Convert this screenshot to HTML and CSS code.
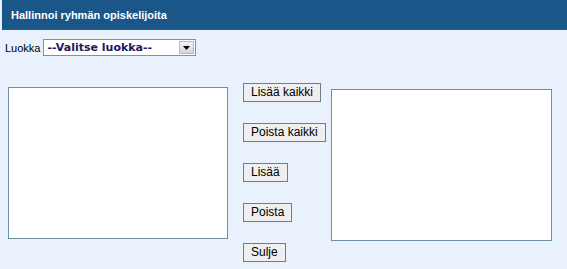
FILE: index.html
```html
<!DOCTYPE html>
<html lang="fi">
<head>
<meta charset="utf-8">
<title>Hallinnoi ryhmän opiskelijoita</title>
<link rel="stylesheet" href="styles.css">
</head>
<body>
<div class="page">
  <div class="header">Hallinnoi ryhmän opiskelijoita</div>
  <div class="filter">
    <label class="label" for="luokka">Luokka</label>
    <span class="select-wrap">
      <select id="luokka" class="class-select">
        <option>--Valitse luokka--</option>
      </select>
      <span class="select-arrow"><svg width="7" height="4" viewBox="0 0 7 4"><path d="M0 0H7L3.5 4Z" fill="#000"/></svg></span>
    </span>
  </div>
  <div class="transfer">
    <select class="list list-left" multiple></select>
    <div class="buttons">
      <button class="btn">Lisää kaikki</button>
      <button class="btn">Poista kaikki</button>
      <button class="btn">Lisää</button>
      <button class="btn">Poista</button>
      <button class="btn">Sulje</button>
    </div>
    <select class="list list-right" multiple></select>
  </div>
</div>
</body>
</html>
```
FILE: styles.css
```css
html, body {
  margin: 0;
  padding: 0;
  background: #e9f1fd;
}
.page {
  width: 567px;
  height: 269px;
  overflow: hidden;
  font-family: "Liberation Sans", Arial, sans-serif;
}
.header {
  margin: 0 0 0 2px;
  height: 30px;
  line-height: 30px;
  padding-left: 9px;
  background: #1a5688;
  border-bottom: 1px solid #1f5f8a;
  box-sizing: border-box;
  color: #ffffff;
  font-weight: bold;
  font-size: 11px;
}
.filter {
  display: flex;
  align-items: center;
  margin-top: 9px;
  padding-left: 5px;
  height: 17px;
}
.label {
  font-size: 11px;
  color: #000;
  margin-right: 3px;
}
.select-wrap {
  position: relative;
  display: inline-block;
}
.class-select {
  appearance: none;
  -webkit-appearance: none;
  width: 153px;
  height: 17px;
  margin: 0;
  padding: 0 0 0 3px;
  border: 1px solid #6d9aa8;
  border-radius: 0;
  background: #ffffff;
  font-family: "DejaVu Sans", Verdana, sans-serif;
  font-weight: bold;
  font-size: 11px;
  color: #1c1a5c;
  line-height: 15px;
  display: block;
}
.select-arrow {
  position: absolute;
  right: 2px;
  top: 2px;
  width: 15px;
  height: 13px;
  box-sizing: border-box;
  border: 1px solid #b8b8b8;
  background: linear-gradient(#f4f4f4, #d4d4d4);
  display: flex;
  align-items: center;
  justify-content: center;
  pointer-events: none;
}
.transfer {
  display: flex;
  align-items: flex-start;
  padding-left: 8px;
  margin-top: 27px;
}
.list {
  appearance: none;
  -webkit-appearance: none;
  width: 220px;
  height: 152px;
  margin: 0;
  padding: 0;
  border: 1px solid #6c8fa6;
  border-radius: 0;
  background: #ffffff;
  box-sizing: border-box;
  overflow: hidden;
}
.list-left {
  margin-top: 4px;
}
.list-right {
  margin-top: 6px;
  width: 221px;
}
.buttons {
  width: 88px;
  margin-left: 15px;
  display: flex;
  flex-direction: column;
  align-items: flex-start;
  gap: 21px;
}
.btn {
  height: 19px;
  margin: 0;
  padding: 0 7px;
  border: 1px solid #7a7a7a;
  border-radius: 0;
  background: #efefef;
  font-family: "Liberation Sans", Arial, sans-serif;
  font-size: 12px;
  color: #000;
  line-height: 17px;
}
```
